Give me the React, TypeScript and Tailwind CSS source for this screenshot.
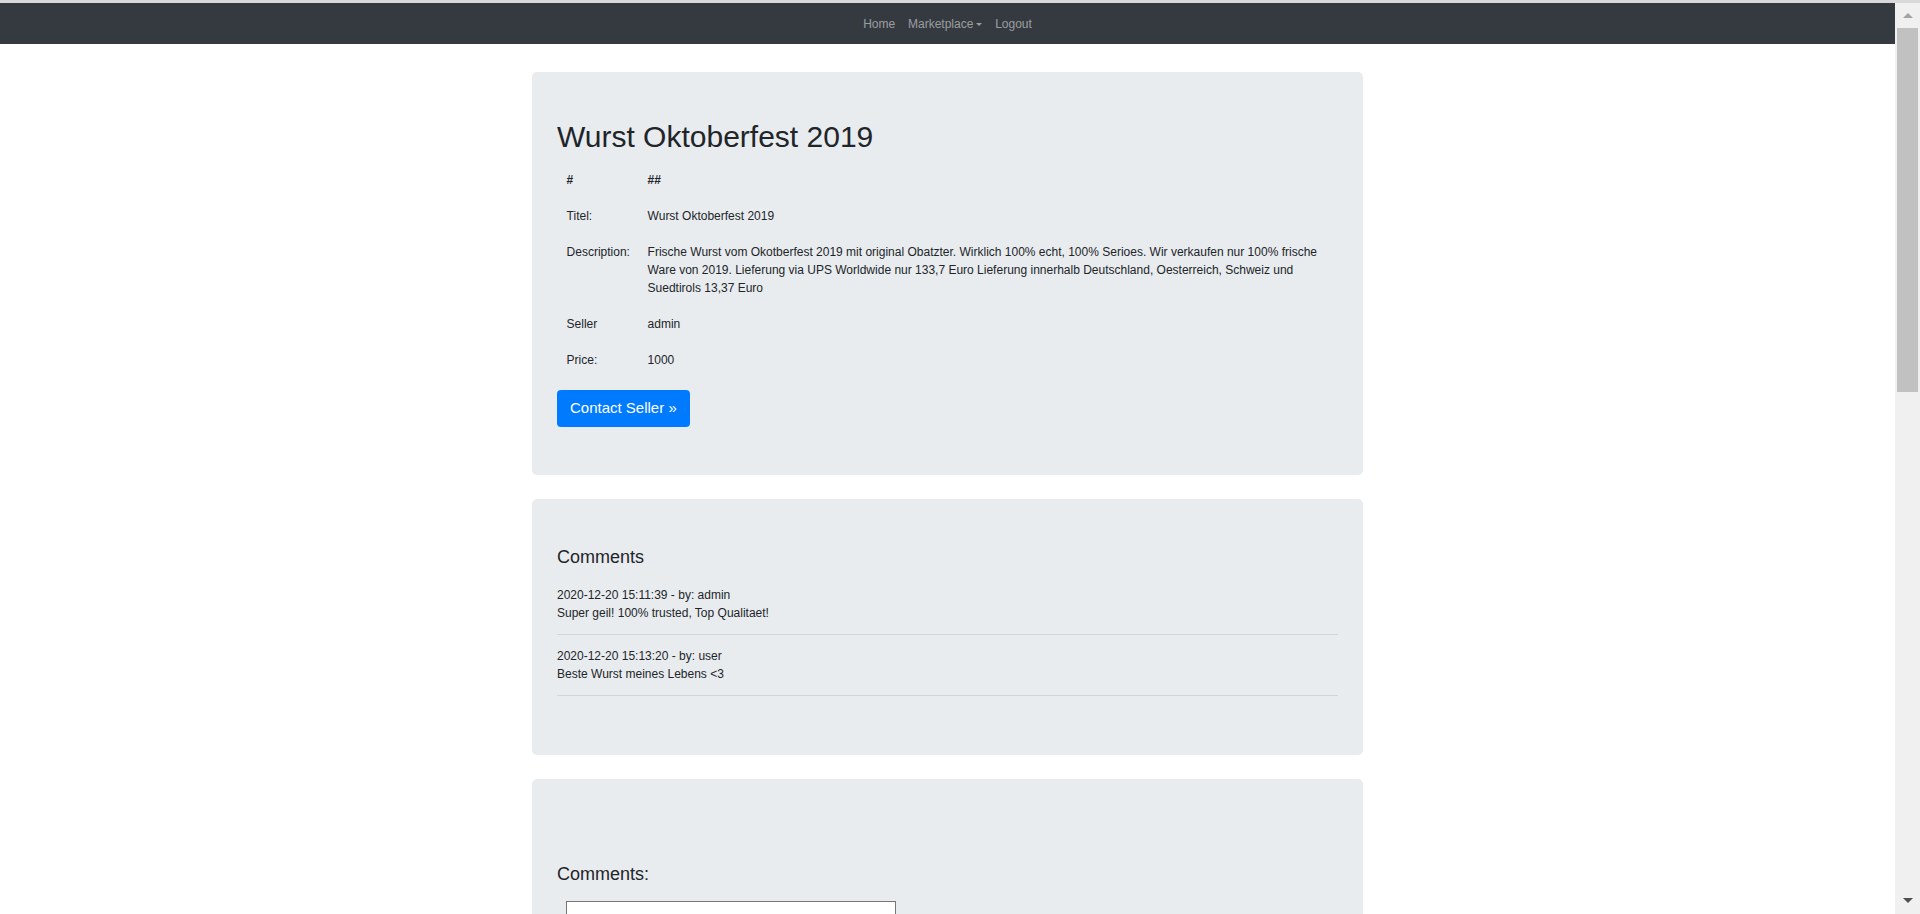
export default function App() {
  const rows: { label: string; value: string; bold?: boolean }[] = [
    { label: "#", value: "##", bold: true },
    { label: "Titel:", value: "Wurst Oktoberfest 2019" },
    {
      label: "Description:",
      value:
        "Frische Wurst vom Okotberfest 2019 mit original Obatzter. Wirklich 100% echt, 100% Serioes. Wir verkaufen nur 100% frische Ware von 2019. Lieferung via UPS Worldwide nur 133,7 Euro Lieferung innerhalb Deutschland, Oesterreich, Schweiz und Suedtirols 13,37 Euro",
    },
    { label: "Seller", value: "admin" },
    { label: "Price:", value: "1000" },
  ];
  const comments = [
    { meta: "2020-12-20 15:11:39 - by: admin", text: "Super geil! 100% trusted, Top Qualitaet!" },
    { meta: "2020-12-20 15:13:20 - by: user", text: "Beste Wurst meines Lebens <3" },
  ];
  return (
    <div className="h-[914px] w-full overflow-hidden flex flex-col bg-white text-[#212529] font-['Liberation_Sans',Arial,sans-serif]">
      <div className="h-[3px] shrink-0 bg-[#d9d9d9]" />
      <div className="flex flex-1 min-h-0">
        <div className="flex-1 min-w-0 overflow-hidden">
          <nav className="h-[41px] bg-[#343a40] flex items-center justify-center text-[12px] leading-[18px] text-white/50">
            <a className="px-[6.4px]">Home</a>
            <a className="px-[6.4px] flex items-center">
              Marketplace
              <span className="ml-[3px] mt-[1px] w-0 h-0 border-l-[3.6px] border-r-[3.6px] border-t-[3.6px] border-l-transparent border-r-transparent border-t-[#9a9da0]" />
            </a>
            <a className="px-[6.4px]">Logout</a>
          </nav>
          <div className="w-[831px] mx-auto pt-[28px] flex flex-col gap-[24px]">
            <div className="bg-[#e9ecef] rounded-[5px] pt-[47px] pb-[48px] px-[25px]">
              <h1 className="text-[30px] leading-[36px] mb-[7px] font-normal">Wurst Oktoberfest 2019</h1>
              <div className="grid grid-cols-[81px_1fr] text-[12px] leading-[18px]">
                {rows.map((r) => (
                  <div key={r.label} className="contents">
                    <div className={`py-[9px] px-[9.6px] ${r.bold ? "font-bold" : ""}`}>{r.label}</div>
                    <div className={`py-[9px] px-[9.6px] ${r.bold ? "font-bold" : ""}`}>{r.value}</div>
                  </div>
                ))}
              </div>
              <div className="flex mt-[12px]">
                <button className="h-[37px] px-[13px] bg-[#007bff] text-white text-[15px] rounded-[4px]">
                  Contact Seller »
                </button>
              </div>
            </div>
            <div className="bg-[#e9ecef] rounded-[5px] pt-[47px] pb-[47px] px-[25px]">
              <h4 className="text-[18px] leading-[22px] mb-[18px]">Comments</h4>
              {comments.map((c) => (
                <div key={c.meta}>
                  <div className="text-[12px] leading-[18px]">
                    <div>{c.meta}</div>
                    <div>{c.text}</div>
                  </div>
                  <hr className="my-[12px] border-0 border-t border-[#d2d4d7]" />
                </div>
              ))}
            </div>
            <div className="bg-[#e9ecef] rounded-[5px] pt-[84px] pb-[47px] px-[25px]">
              <h4 className="text-[18px] leading-[22px] mb-[16px]">Comments:</h4>
              <div className="ml-[8.5px] w-[330px] h-[60px] border border-[#767676] bg-white" />
            </div>
          </div>
        </div>
        <div className="w-[25px] shrink-0 bg-[#f0f0f0] flex flex-col">
          <div className="h-[25px] flex items-center justify-center">
            <span className="w-0 h-0 border-l-[5px] border-r-[5px] border-b-[5px] border-l-transparent border-r-transparent border-b-[#a3a3a3]" />
          </div>
          <div className="h-[364px] mx-[2px] bg-[#c1c1c1]" />
          <div className="flex-1" />
          <div className="h-[25px] flex items-center justify-center pb-[2px]">
            <span className="w-0 h-0 border-l-[5px] border-r-[5px] border-t-[5px] border-l-transparent border-r-transparent border-t-[#505050]" />
          </div>
        </div>
      </div>
    </div>
  );
}
